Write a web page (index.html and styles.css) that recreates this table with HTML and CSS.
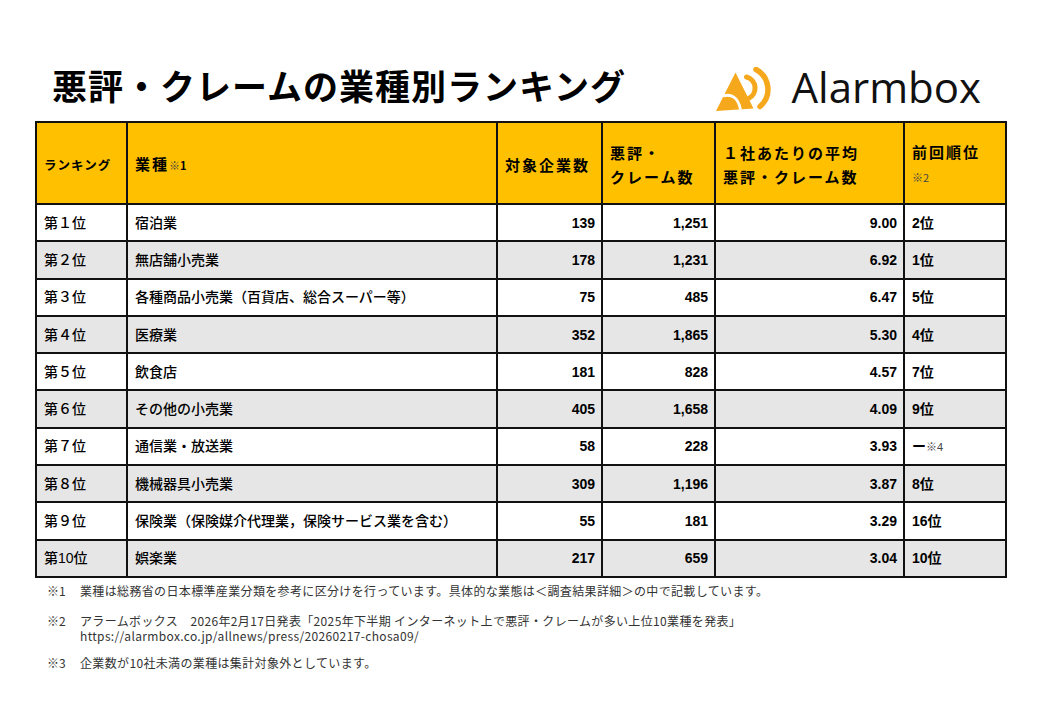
FILE: index.html
```html
<!DOCTYPE html>
<html lang="ja">
<head>
<meta charset="utf-8">
<title>悪評・クレームの業種別ランキング</title>
<link rel="stylesheet" href="styles.css">
</head>
<body>
<div class="page">
  <header class="head">
    <h1 class="title">悪評・クレームの業種別ランキング</h1>
    <div class="logo">
      <svg class="logo-icon" width="57" height="44" viewBox="0 0 57 44" aria-hidden="true">
        <path d="M19.5 5.5 L0 44 L37.5 41.5 Z" fill="#F6A81C"/>
        <path d="M7 29 C15 26.5 22 30 24.5 42.5" fill="none" stroke="#fff" stroke-width="2.8"/>
        <path d="M30.5 10 A11.5 11.5 0 0 1 32.5 31.5" fill="none" stroke="#F6A81C" stroke-width="5" stroke-linecap="round"/>
        <path d="M40 2.5 A22.5 22.5 0 0 1 44 39.5" fill="none" stroke="#F6A81C" stroke-width="5.5" stroke-linecap="round"/>
      </svg>
      <span class="logo-text">Alarmbox</span>
    </div>
  </header>

  <table class="rank">
    <colgroup>
      <col class="c1"><col class="c2"><col class="c3"><col class="c4"><col class="c5"><col class="c6">
    </colgroup>
    <thead>
      <tr>
        <th class="h-small">ランキング</th>
        <th>業種<span class="note">※<b>1</b></span></th>
        <th>対象企業数</th>
        <th>悪評・<br>クレーム数</th>
        <th>１社あたりの平均<br>悪評・クレーム数</th>
        <th>前回順位<br><span class="note">※2</span></th>
      </tr>
    </thead>
    <tbody>
      <tr><td>第１位</td><td>宿泊業</td><td class="num">139</td><td class="num">1,251</td><td class="num">9.00</td><td class="prev">2位</td></tr>
      <tr class="alt"><td>第２位</td><td>無店舗小売業</td><td class="num">178</td><td class="num">1,231</td><td class="num">6.92</td><td class="prev">1位</td></tr>
      <tr><td>第３位</td><td>各種商品小売業（百貨店、総合スーパー等）</td><td class="num">75</td><td class="num">485</td><td class="num">6.47</td><td class="prev">5位</td></tr>
      <tr class="alt"><td>第４位</td><td>医療業</td><td class="num">352</td><td class="num">1,865</td><td class="num">5.30</td><td class="prev">4位</td></tr>
      <tr><td>第５位</td><td>飲食店</td><td class="num">181</td><td class="num">828</td><td class="num">4.57</td><td class="prev">7位</td></tr>
      <tr class="alt"><td>第６位</td><td>その他の小売業</td><td class="num">405</td><td class="num">1,658</td><td class="num">4.09</td><td class="prev">9位</td></tr>
      <tr><td>第７位</td><td>通信業・放送業</td><td class="num">58</td><td class="num">228</td><td class="num">3.93</td><td class="prev">ー<span class="note">※4</span></td></tr>
      <tr class="alt"><td>第８位</td><td>機械器具小売業</td><td class="num">309</td><td class="num">1,196</td><td class="num">3.87</td><td class="prev">8位</td></tr>
      <tr><td>第９位</td><td>保険業（保険媒介代理業，保険サービス業を含む）</td><td class="num">55</td><td class="num">181</td><td class="num">3.29</td><td class="prev">16位</td></tr>
      <tr class="alt"><td>第10位</td><td>娯楽業</td><td class="num">217</td><td class="num">659</td><td class="num">3.04</td><td class="prev">10位</td></tr>
    </tbody>
  </table>

  <div class="notes">
    <div class="fn"><span class="fn-mark">※1</span><span class="fn-text">業種は総務省の日本標準産業分類を参考に区分けを行っています。具体的な業態は＜調査結果詳細＞の中で記載しています。</span></div>
    <div class="fn"><span class="fn-mark">※2</span><span class="fn-text">アラームボックス　2026年2月17日発表「2025年下半期 インターネット上で悪評・クレームが多い上位10業種を発表」<br>https://alarmbox.co.jp/allnews/press/20260217-chosa09/</span></div>
    <div class="fn fn-last"><span class="fn-mark">※3</span><span class="fn-text">企業数が10社未満の業種は集計対象外としています。</span></div>
  </div>
</div>
</body>
</html>
```

FILE: styles.css
```css
html, body {
  margin: 0;
  padding: 0;
  background: #fff;
}

body {
  font-family: "Noto Sans CJK JP", "Noto Sans", sans-serif;
  color: #000;
}

.page {
  width: 970px;
  margin-left: 35px;
}

.head {
  display: flex;
  justify-content: space-between;
  align-items: flex-start;
  height: 61px;
  padding-top: 60px;
}

.title {
  margin: 7px 0 0 17px;
  font-size: 35px;
  line-height: 36px;
  font-weight: 700;
  letter-spacing: 1px;
  color: #000;
}

.logo {
  display: flex;
  align-items: flex-start;
  margin-right: 24px;
}

.logo-icon {
  display: block;
  margin-top: 7px;
  margin-right: 19px;
}

.logo-text {
  font-family: "Open Sans", "Noto Sans", sans-serif;
  font-size: 42px;
  line-height: 42px;
  font-weight: 400;
  color: #111;
  margin-top: 6px;
}

.rank {
  width: 970px;
  border-collapse: collapse;
  table-layout: fixed;
}

.c1 { width: 91px; }
.c2 { width: 370px; }
.c3 { width: 105px; }
.c4 { width: 113px; }
.c5 { width: 189px; }
.c6 { width: 102px; }

.rank th,
.rank td {
  border: 2px solid #111;
  padding: 0 7px;
  vertical-align: middle;
  text-align: left;
}

.rank thead tr {
  height: 82px;
}

.rank th {
  background: #FFC000;
  font-size: 15px;
  line-height: 24px;
  font-weight: 700;
  letter-spacing: 2px;
  padding-top: 3px;
  white-space: nowrap;
}

.rank th.h-small {
  font-size: 12.5px;
  letter-spacing: 1px;
}

.note {
  font-size: 11px;
  font-weight: 400;
  letter-spacing: 0;
  color: #444;
}

.note b {
  font-weight: 700;
  color: #000;
}

.rank tbody tr {
  height: 37.3px;
}

.rank td {
  font-family: "Liberation Sans", "Noto Sans CJK JP", sans-serif;
  font-size: 14px;
  line-height: 18px;
  font-weight: 500;
  background: #fff;
  white-space: nowrap;
}

.rank tr.alt td {
  background: #E6E6E6;
}

.rank td.num {
  text-align: right;
  padding-right: 6px;
  font-weight: 700;
}

.rank td.prev {
  font-weight: 700;
}

.notes {
  margin: 5px 0 0 12px;
  display: flex;
  flex-direction: column;
  gap: 15px;
}

.fn {
  display: flex;
  font-size: 12px;
  line-height: 15px;
  letter-spacing: 0.35px;
  color: #333;
}

.fn-last {
  margin-top: -3px;
}

.fn-mark {
  width: 33px;
  flex: none;
  letter-spacing: 0;
}
```
